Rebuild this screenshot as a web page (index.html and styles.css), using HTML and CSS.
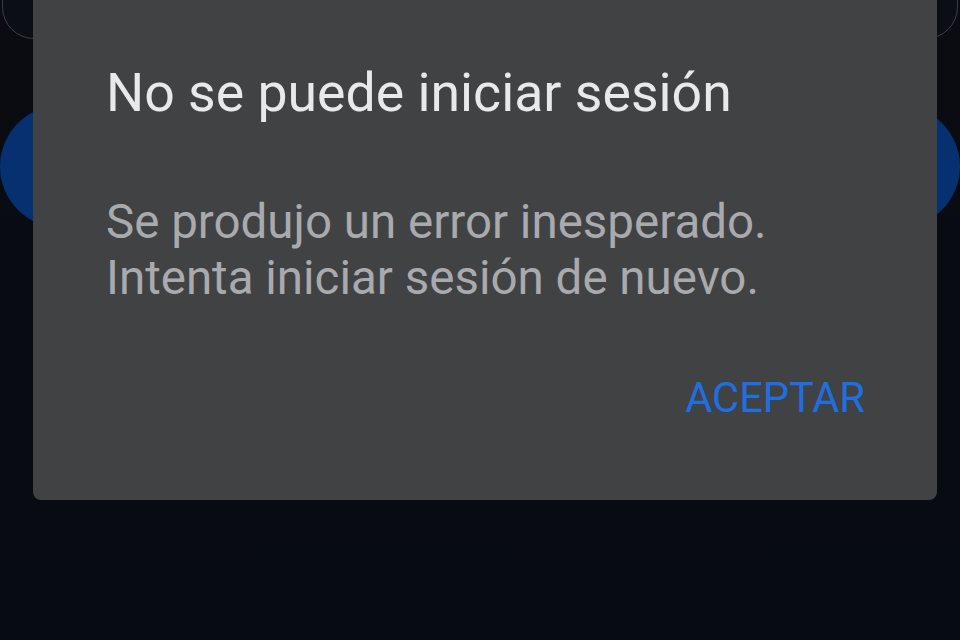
FILE: index.html
```html
<!DOCTYPE html>
<html lang="es">
<head>
<meta charset="utf-8">
<link rel="stylesheet" href="styles.css">
</head>
<body>
<div class="screen">
  <div class="bg-outline"></div>
  <div class="bg-pill"></div>
  <div class="dialog">
    <h1 class="title">No se puede iniciar sesión</h1>
    <p class="message">Se produjo un error inesperado.<br>Intenta iniciar sesión de nuevo.</p>
    <div class="actions"><button class="btn">ACEPTAR</button></div>
  </div>
</div>
</body>
</html>
```
FILE: styles.css
```css
html, body {
  margin: 0;
  padding: 0;
  background: #080b11;
}
.screen {
  position: relative;
  width: 960px;
  height: 640px;
  overflow: hidden;
  background: linear-gradient(180deg, #0a0c11 0%, #080b12 60%, #070b12 100%);
  font-family: Roboto, "Noto Sans", sans-serif;
}
.bg-outline {
  position: absolute;
  left: 2px;
  right: 2px;
  top: -60px;
  height: 97px;
  border: 1.5px solid #3a3d43;
  border-radius: 32px;
  background: #0b0e14;
}
.bg-pill {
  position: absolute;
  left: 0;
  right: 0;
  top: 105px;
  height: 123px;
  border-radius: 62px;
  background: #06306f;
}
.dialog {
  position: absolute;
  left: 33px;
  top: 0;
  width: 904px;
  height: 500px;
  box-sizing: border-box;
  background: #414244;
  border-radius: 0 0 8px 8px;
  padding: 0 72px 0 73px;
}
.title {
  margin: 0;
  padding-top: 58px;
  font-size: 53.6px;
  line-height: 70px;
  font-weight: 400;
  color: #e9e9eb;
}
.message {
  margin: 0;
  padding-top: 66px;
  font-size: 47.5px;
  line-height: 56px;
  color: #a9aaae;
}
.actions {
  display: flex;
  justify-content: flex-end;
  padding-top: 67px;
}
.btn {
  background: none;
  border: 0;
  padding: 0;
  font-family: Roboto, sans-serif;
  font-size: 41.6px;
  line-height: 50px;
  color: #1f6fe0;
}
```
